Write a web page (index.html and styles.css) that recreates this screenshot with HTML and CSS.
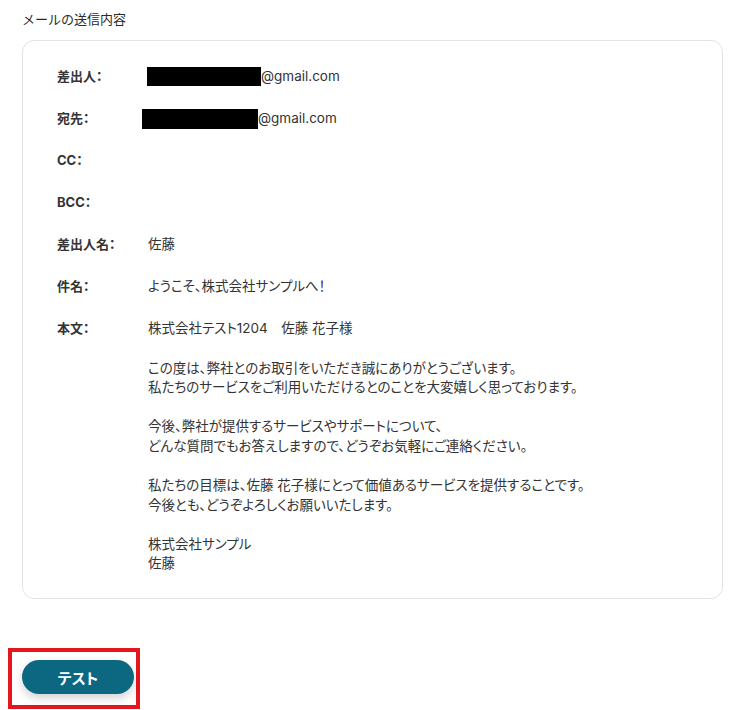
FILE: index.html
```html
<!DOCTYPE html>
<html lang="ja">
<head>
<meta charset="utf-8">
<link rel="stylesheet" href="styles.css">
</head>
<body>
<div class="page">
  <div class="title">メールの送信内容</div>
  <div class="card">
    <div class="grid">
      <div class="label">差出人：</div>
      <div class="value"><span class="redact"></span><span class="latin">@gmail.com</span></div>
      <div class="label">宛先：</div>
      <div class="value"><span class="redact redact-shift"></span><span class="latin">@gmail.com</span></div>
      <div class="label">CC：</div>
      <div class="value"></div>
      <div class="label">BCC：</div>
      <div class="value"></div>
      <div class="label">差出人名：</div>
      <div class="value">佐藤</div>
      <div class="label">件名：</div>
      <div class="value">ようこそ、株式会社サンプルへ！</div>
      <div class="label">本文：</div>
      <div class="value body-text">株式会社テスト1204　佐藤 花子様<br><br>この度は、弊社とのお取引をいただき誠にありがとうございます。<br>私たちのサービスをご利用いただけるとのことを大変嬉しく思っております。<br><br>今後、弊社が提供するサービスやサポートについて、<br>どんな質問でもお答えしますので、どうぞお気軽にご連絡ください。<br><br>私たちの目標は、佐藤 花子様にとって価値あるサービスを提供することです。<br>今後とも、どうぞよろしくお願いいたします。<br><br>株式会社サンプル<br>佐藤</div>
    </div>
  </div>
  <div class="highlight">
    <button class="btn">テスト</button>
  </div>
</div>
</body>
</html>
```

FILE: styles.css
```css
html, body {
  margin: 0;
  padding: 0;
  background: #ffffff;
}
body {
  font-family: Inter, "Noto Sans CJK JP", "Noto Sans", sans-serif;
  color: #333333;
  font-size: 13px;
}
.page {
  padding: 9px 24px 0 22px;
}
.title {
  font-family: "Noto Sans CJK JP", sans-serif;
  font-size: 13px;
  line-height: 20px;
  color: #2b2b2b;
  margin-bottom: 11px;
}
.card {
  border: 1px solid #e3e3e3;
  border-radius: 12px;
  padding: 26px 34px 23px 34px;
  height: 559px;
  box-sizing: border-box;
}
.grid {
  display: grid;
  grid-template-columns: 91px 1fr;
  row-gap: 22.4px;
  line-height: 19.6px;
  font-feature-settings: "palt";
  font-size: 13.5px;
}
.label {
  font-weight: 700;
  font-size: 13px;
  color: #333;
  white-space: nowrap;
}
.value {
  color: #333;
  min-height: 19.6px;
}
.latin {
  font-size: 13.5px;
}
.redact {
  display: inline-block;
  width: 114px;
  height: 19px;
  background: #000;
  vertical-align: -5px;
  margin-left: -1px;
}
.redact-shift {
  width: 116px;
  height: 20px;
  margin-left: -6px;
  vertical-align: -6px;
}
.highlight {
  display: inline-block;
  border: 4px solid #e5161d;
  padding: 8px 2px 11px 10px;
  margin-top: 49px;
  margin-left: -14px;
}
.btn {
  display: block;
  width: 112px;
  height: 34px;
  border: none;
  border-radius: 17px;
  background: #0c6781;
  color: #ffffff;
  font-family: "Noto Sans CJK JP", sans-serif;
  font-feature-settings: "palt";
  font-weight: 700;
  font-size: 15px;
  box-shadow: 0 4px 10px rgba(0, 0, 0, 0.18);
  padding: 0;
}
```
